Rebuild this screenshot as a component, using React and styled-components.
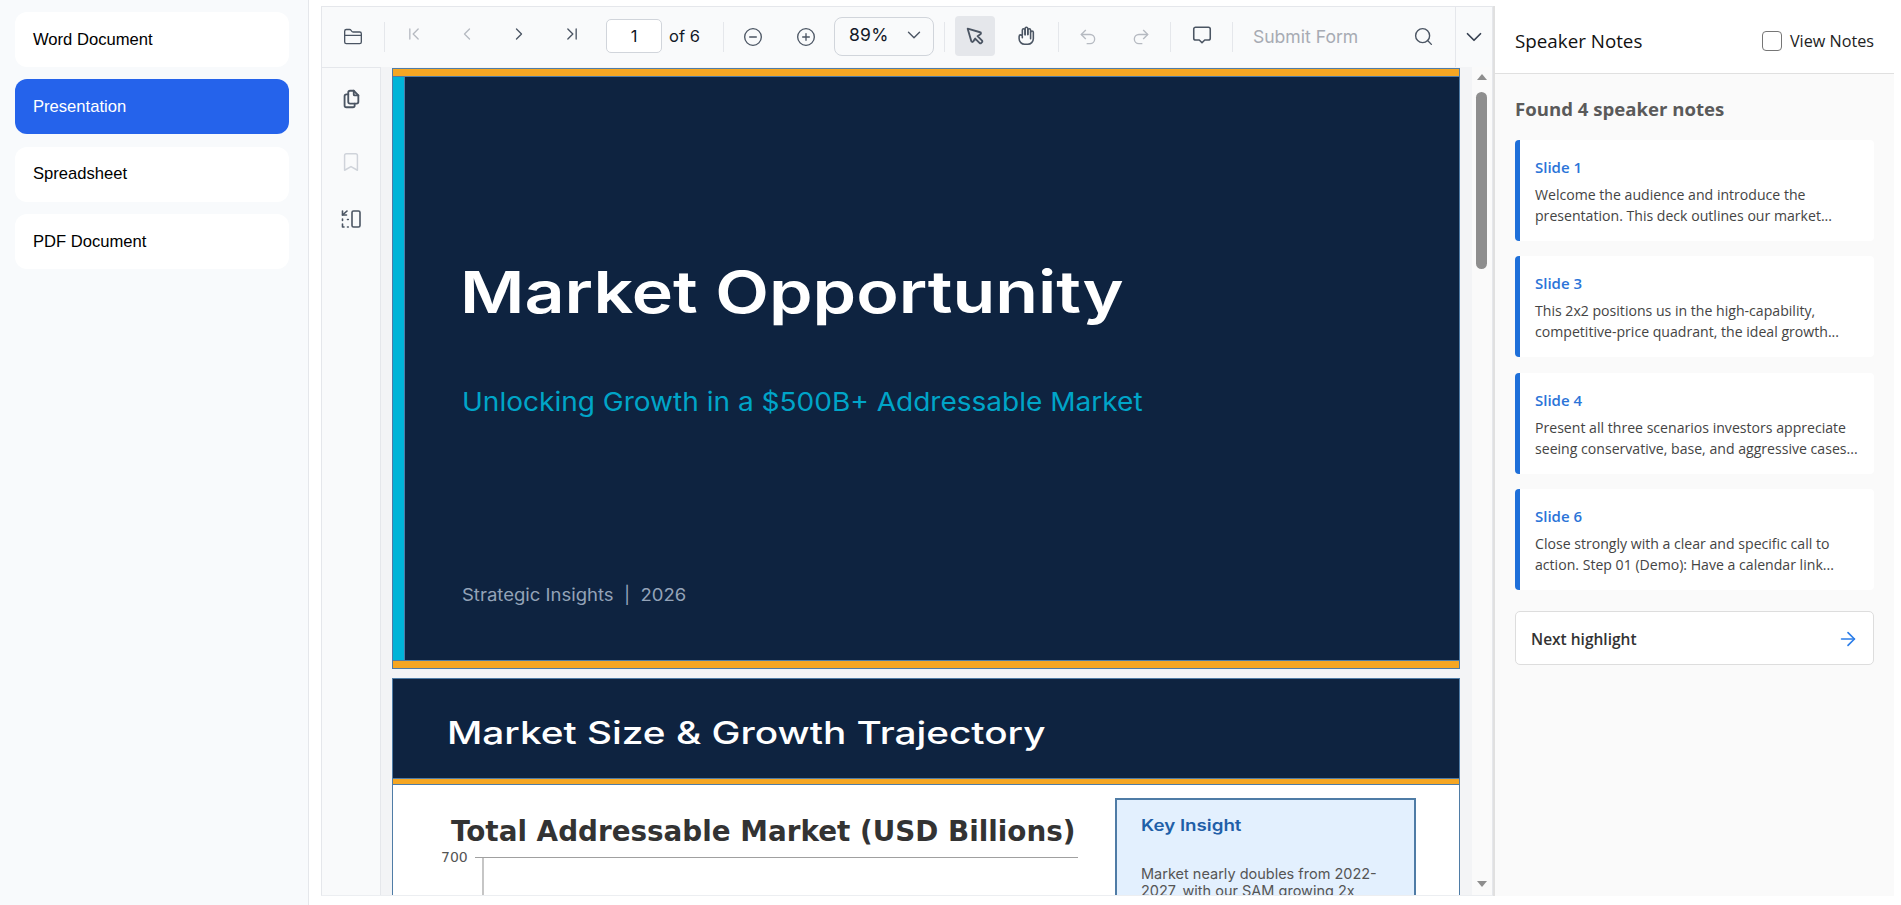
import React from "react";
import styled, { createGlobalStyle } from "styled-components";
import {
  FolderClosed,
  ChevronFirst,
  ChevronLeft,
  ChevronRight,
  ChevronLast,
  CircleMinus,
  CirclePlus,
  ChevronDown,
  Undo2,
  Redo2,
  Search,
  Bookmark,
  ArrowRight,
} from "lucide-react";
import { TbPointer, TbFiles } from "react-icons/tb";

const GlobalStyle = createGlobalStyle`
  html, body {
    margin: 0;
    padding: 0;
    background: #fff;
    overflow: hidden;
  }
  * { box-sizing: border-box; }
`;

const Page = styled.div`
  display: flex;
  width: 1901px;
  height: 905px;
  overflow: hidden;
  font-family: "Liberation Sans", Arial, sans-serif;
`;

// colonne de gauche
const Sidebar = styled.aside`
  width: 309px;
  flex: none;
  display: flex;
  flex-direction: column;
  gap: 12.4px;
  padding: 12px 19px 0 15px;
  background: #f8fafc;
  border-right: 1px solid #e5e7eb;
`;

const DocButton = styled.div`
  height: 55px;
  display: flex;
  align-items: center;
  padding: 0 18px;
  border-radius: 12px;
  font-size: 16.6px;
  color: ${(p) => (p.$active ? "#fff" : "#000")};
  background: ${(p) => (p.$active ? "#2563eb" : "#fff")};
`;

const Workspace = styled.div`
  flex: 1;
  display: flex;
  padding: 6px 7px 9px 12px;
  min-width: 0;
`;

const Viewer = styled.section`
  width: 1172px;
  flex: none;
  display: flex;
  flex-direction: column;
  background: #f3f4f6;
  border: 1px solid #e5e7eb;
  border-bottom-color: #eceef1;
  overflow: hidden;
`;

const Toolbar = styled.div`
  height: 60px;
  flex: none;
  display: flex;
  align-items: center;
  background: #f9fafb;
  font-family: Inter, sans-serif;
`;

const Tool = styled.div`
  width: ${(p) => p.$w || 40}px;
  height: 40px;
  flex: none;
  margin-left: ${(p) => p.$ml || 0}px;
  display: flex;
  align-items: center;
  justify-content: center;
  border-radius: 4px;
  color: ${(p) => (p.$off ? "#b6bac1" : "#4b5563")};
  background: ${(p) => (p.$on ? "#e5e7eb" : "transparent")};
  transform: translateY(${(p) => p.$dy || 0}px);
`;

const SearchTool = styled(Tool)`
  margin-left: auto;
  margin-right: 12px;
`;

const Sep = styled.span`
  width: 1px;
  height: 30px;
  flex: none;
  margin-left: ${(p) => p.$ml || 0}px;
  background: #e5e7eb;
`;

const PageInput = styled.div`
  width: 56px;
  height: 34px;
  flex: none;
  margin: -2px 0 0 14px;
  display: flex;
  align-items: center;
  justify-content: center;
  padding-bottom: 1px;
  background: #fff;
  border: 1px solid #d1d5db;
  border-radius: 5px;
  font-size: 16.5px;
  color: #111827;
`;

const OfPages = styled.span`
  margin-left: 7px;
  padding-bottom: 3px;
  font-size: 16.5px;
  color: #111827;
`;

const ZoomSelect = styled.div`
  width: 100px;
  height: 39px;
  flex: none;
  margin: -2px 0 0 8px;
  display: flex;
  align-items: center;
  justify-content: space-between;
  padding: 0 8px 3px 14px;
  background: #f9fafb;
  border: 1px solid #d1d5db;
  border-radius: 8px;
  font-size: 17.5px;
  letter-spacing: 0.4px;
  color: #111827;
`;

const SubmitForm = styled.span`
  margin-left: 20px;
  padding-bottom: 1px;
  font-size: 17.6px;
  color: #a7abb3;
  white-space: nowrap;
`;

const MoreBox = styled.div`
  width: 37px;
  flex: none;
  align-self: stretch;
  display: flex;
  align-items: center;
  justify-content: center;
  border-left: 1px solid #e5e7eb;
  color: #374151;
`;

const ViewerBody = styled.div`
  flex: 1;
  display: flex;
  min-height: 0;
`;

const Rail = styled.div`
  width: 59px;
  flex: none;
  display: flex;
  flex-direction: column;
  align-items: center;
  gap: 20px;
  padding-top: 11px;
  background: #f9fafb;
  border-right: 1px solid #e5e7eb;
  border-top: 1px solid #e5e7eb;
`;

const RailIcon = styled.div`
  width: 40px;
  height: 40px;
  display: flex;
  align-items: center;
  justify-content: center;
  color: ${(p) => (p.$off ? "#cfd3da" : "#4b5563")};
  transform: translateY(${(p) => p.$dy || 0}px);
`;

const Pages = styled.div`
  flex: 1;
  min-width: 0;
  display: flex;
  flex-direction: column;
  gap: 9px;
  padding: 1px 12px 0 11px;
  overflow: hidden;
`;

const TitleSlide = styled.div`
  height: 601px;
  flex: none;
  display: flex;
  flex-direction: column;
  background: #0e2340;
  border: 1px solid #4f7ca6;
`;

const GoldBar = styled.div`
  height: ${(p) => p.$h}px;
  flex: none;
  background: #f5a623;
  border-${(p) => p.$edge}: 1px solid #4f7ca6;
`;

const TitleRow = styled.div`
  flex: 1;
  display: flex;
  min-height: 0;
`;

const CyanBar = styled.div`
  width: 12px;
  flex: none;
  background: #00b4d8;
  border-right: 1px solid #4f7ca6;
`;

const TitleBody = styled.div`
  flex: 1;
  display: flex;
  flex-direction: column;
  padding: 181px 0 0 57px;
`;

// le PDF étire ses polices en largeur
const BigTitle = styled.h1`
  margin: 0 0 0 -2px;
  font-family: Inter, sans-serif;
  font-size: 58px;
  font-weight: 600;
  line-height: 68px;
  white-space: nowrap;
  color: #fff;
  transform: scaleX(1.205);
  transform-origin: left center;
`;

const Subtitle = styled.div`
  margin-top: 60px;
  font-family: Inter, sans-serif;
  font-size: 26px;
  line-height: 32px;
  white-space: nowrap;
  color: #00a5c8;
  transform: scaleX(1.078);
  transform-origin: left center;
`;

const Byline = styled.div`
  margin-top: 166px;
  font-family: Inter, sans-serif;
  font-size: 17px;
  line-height: 22px;
  white-space: pre;
  color: #94a3b8;
  transform: scaleX(1.088);
  transform-origin: left center;
`;

const ChartSlide = styled.div`
  flex: none;
  height: 500px;
  background: #fff;
  border: 1px solid #4f7ca6;
`;

const SlideHeader = styled.div`
  height: 100px;
  display: flex;
  align-items: center;
  padding: 8px 0 0 54px;
  background: #0e2340;
  border-bottom: 1px solid #4f7ca6;
`;

const SlideTitle = styled.h2`
  margin: 0;
  font-family: Inter, sans-serif;
  font-size: 31px;
  font-weight: 500;
  white-space: nowrap;
  color: #fff;
  transform: scaleX(1.25);
  transform-origin: left center;
`;

const ChartRow = styled.div`
  position: relative;
  display: flex;
  justify-content: space-between;
  padding: 13px 43px 0 48px;
`;

const ChartCol = styled.div`
  width: 640px;
`;

const ChartTitle = styled.div`
  margin: 17px 0 0 10px;
  font-family: "DejaVu Sans", sans-serif;
  font-size: 27.8px;
  font-weight: 700;
  line-height: 34px;
  white-space: nowrap;
  color: #333;
`;

const ChartPlot = styled.div`
  margin-top: 1px;
  display: flex;
  gap: 7px;
`;

const AxisLabel = styled.span`
  font-family: "DejaVu Sans", sans-serif;
  font-size: 14px;
  line-height: 14px;
  color: #555;
`;

const InsightBox = styled.div`
  width: 301px;
  height: 200px;
  padding: 14px 20px 0 24px;
  background: #e3f0fe;
  border: 2px solid #4f7ca6;
`;

const InsightTitle = styled.div`
  font-family: Inter, sans-serif;
  font-size: 16px;
  font-weight: 600;
  line-height: 22px;
  color: #1f5fa8;
  transform: scaleX(1.17);
  transform-origin: left center;
`;

const InsightText = styled.div`
  margin-top: 29px;
  font-family: Inter, sans-serif;
  font-size: 14.5px;
  line-height: 17px;
  white-space: nowrap;
  color: #555;
`;

const ScrollTrack = styled.div`
  width: 20px;
  flex: none;
  position: relative;
  background: #fafafa;
`;

const ScrollArrow = styled.span`
  position: absolute;
  left: 5px;
  ${(p) => (p.$down ? "bottom: 8px;" : "top: 7px;")}
  border-left: 5px solid transparent;
  border-right: 5px solid transparent;
  ${(p) => (p.$down ? "border-top" : "border-bottom")}: 6px solid #8e8e8e;
`;

const ScrollThumb = styled.div`
  position: absolute;
  left: 4px;
  top: 25px;
  width: 11px;
  height: 177px;
  border-radius: 6px;
  background: #8e8e8e;
`;

const Sash = styled.div`
  width: 2px;
  flex: none;
  background: #e0e0e0;
`;

const NotesPanel = styled.aside`
  width: 399px;
  flex: none;
  display: flex;
  flex-direction: column;
  background: #fafafa;
  font-family: "Open Sans", "Noto Sans", sans-serif;
`;

const NotesHeader = styled.header`
  height: 68px;
  flex: none;
  display: flex;
  align-items: center;
  justify-content: space-between;
  padding: 2px 20px 0;
  background: #fff;
  border-bottom: 1px solid #e0e0e0;
`;

const NotesHeading = styled.div`
  font-size: 18.8px;
  color: #111;
`;

const ViewToggle = styled.div`
  display: flex;
  align-items: center;
  gap: 8px;
  font-size: 16.2px;
  font-weight: 500;
  color: #222;
`;

const CheckBox = styled.span`
  width: 20px;
  height: 20px;
  background: #fff;
  border: 1.5px solid #767676;
  border-radius: 4px;
`;

const NotesBody = styled.div`
  display: flex;
  flex-direction: column;
  gap: 15.5px;
  padding: 23px 20px 0;
`;

const FoundLabel = styled.div`
  margin-bottom: 3px;
  font-size: 18.6px;
  font-weight: 700;
  line-height: 24px;
  color: #5a5a5a;
`;

const NoteCard = styled.div`
  height: 101px;
  padding: 15px 12px 0 15px;
  background: #fff;
  border-left: 5px solid #1e6fd9;
  border-radius: 4px;
`;

const NoteSlide = styled.div`
  font-size: 15px;
  font-weight: 600;
  line-height: 24px;
  color: #2b74d8;
`;

const NoteText = styled.div`
  margin-top: 5px;
  font-size: 14.1px;
  line-height: 21px;
  white-space: nowrap;
  color: #444;
`;

const NextButton = styled.div`
  height: 54px;
  margin-top: 5px;
  display: flex;
  align-items: center;
  justify-content: space-between;
  padding: 2px 14px 0 15px;
  background: #fff;
  border: 1px solid #ddd;
  border-radius: 5px;
  font-size: 15.5px;
  font-weight: 600;
  color: #333;
`;

const docs = ["Word Document", "Presentation", "Spreadsheet", "PDF Document"];

const notes = [
  {
    slide: "Slide 1",
    lines: ["Welcome the audience and introduce the", "presentation. This deck outlines our market..."],
  },
  {
    slide: "Slide 3",
    lines: ["This 2x2 positions us in the high-capability,", "competitive-price quadrant, the ideal growth..."],
  },
  {
    slide: "Slide 4",
    lines: ["Present all three scenarios investors appreciate", "seeing conservative, base, and aggressive cases..."],
  },
  {
    slide: "Slide 6",
    lines: ["Close strongly with a clear and specific call to", "action. Step 01 (Demo): Have a calendar link..."],
  },
];

function MoveToPanelIcon() {
  return (
    <svg width="24" height="24" viewBox="0 0 24 24" fill="none" stroke="currentColor" strokeWidth="1.6" strokeLinecap="round" strokeLinejoin="round">
      <rect x="13" y="4" width="8" height="16" rx="1.5" />
      <path d="M3.5 4v4h4" />
      <path d="M3.5 8L8 4" />
      <path d="M3.5 12v1.5M3.5 17v3h1.5M8.5 20h.8M8.5 12.5h.8" />
    </svg>
  );
}

function HandIcon() {
  return (
    <svg width="22" height="22" viewBox="0 0 24 24" fill="none" stroke="currentColor" strokeWidth="1.7" strokeLinecap="round" strokeLinejoin="round">
      <path d="M8 11V5.5a1.5 1.5 0 0 1 3 0V11" />
      <path d="M11 10V4a1.5 1.5 0 0 1 3 0v6" />
      <path d="M14 10.5V5.5a1.5 1.5 0 0 1 3 0V15" />
      <path d="M17 8a1.5 1.5 0 0 1 3 0v7a6 6 0 0 1-6 6h-3.5A6 6 0 0 1 4.5 15v-2.5a1.75 1.75 0 0 1 3.5 0V14" />
    </svg>
  );
}

function CommentIcon() {
  return (
    <svg width="22" height="22" viewBox="0 0 24 24" fill="none" stroke="currentColor" strokeWidth="1.7" strokeLinecap="round" strokeLinejoin="round">
      <path d="M5 3.5h14a2 2 0 0 1 2 2v10a2 2 0 0 1-2 2h-4l-3 3-3-3H5a2 2 0 0 1-2-2v-10a2 2 0 0 1 2-2z" />
    </svg>
  );
}

export default function App() {
  return (
    <>
      <GlobalStyle />
      <Page>
        <Sidebar>
          {docs.map((d) => (
            <DocButton key={d} $active={d === "Presentation"}>
              {d}
            </DocButton>
          ))}
        </Sidebar>

        <Workspace>
          <Viewer>
            <Toolbar>
              <Tool $ml={11}>
                <FolderClosed size={20} strokeWidth={1.6} />
              </Tool>
              <Sep $ml={11} />
              <Tool $ml={9} $off $dy={-3}>
                <ChevronFirst size={20} strokeWidth={1.6} />
              </Tool>
              <Tool $ml={13} $off $dy={-3}>
                <ChevronLeft size={20} strokeWidth={1.6} />
              </Tool>
              <Tool $ml={12} $dy={-3}>
                <ChevronRight size={20} strokeWidth={1.6} />
              </Tool>
              <Tool $ml={13} $dy={-3}>
                <ChevronLast size={20} strokeWidth={1.6} />
              </Tool>
              <PageInput>1</PageInput>
              <OfPages>of 6</OfPages>
              <Sep $ml={23} />
              <Tool $ml={9}>
                <CircleMinus size={20} strokeWidth={1.6} />
              </Tool>
              <Tool $ml={13}>
                <CirclePlus size={20} strokeWidth={1.6} />
              </Tool>
              <ZoomSelect>
                89%
                <ChevronDown size={22} strokeWidth={1.5} color="#4b5563" />
              </ZoomSelect>
              <Sep $ml={10} />
              <Tool $ml={10} $on $dy={-1}>
                <TbPointer size={22} />
              </Tool>
              <Tool $ml={11} $dy={-1}>
                <HandIcon />
              </Tool>
              <Sep $ml={12} />
              <Tool $ml={9} $off>
                <Undo2 size={20} strokeWidth={1.6} />
              </Tool>
              <Tool $ml={13} $off>
                <Redo2 size={20} strokeWidth={1.6} />
              </Tool>
              <Sep $ml={9} />
              <Tool $ml={11} $dy={-2}>
                <CommentIcon />
              </Tool>
              <Sep $ml={10} />
              <SubmitForm>Submit Form</SubmitForm>
              <SearchTool $dy={-1}>
                <Search size={21} strokeWidth={1.6} />
              </SearchTool>
              <MoreBox>
                <ChevronDown size={26} strokeWidth={1.6} />
              </MoreBox>
            </Toolbar>

            <ViewerBody>
              <Rail>
                <RailIcon>
                  <TbFiles size={22} />
                </RailIcon>
                <RailIcon $off $dy={3}>
                  <Bookmark size={22} strokeWidth={1.6} />
                </RailIcon>
                <RailIcon>
                  <MoveToPanelIcon />
                </RailIcon>
              </Rail>

              <Pages>
                <TitleSlide>
                  <GoldBar $h={8} $edge="bottom" />
                  <TitleRow>
                    <CyanBar />
                    <TitleBody>
                      <BigTitle>Market Opportunity</BigTitle>
                      <Subtitle>Unlocking Growth in a $500B+ Addressable Market</Subtitle>
                      <Byline>Strategic Insights  |  2026</Byline>
                    </TitleBody>
                  </TitleRow>
                  <GoldBar $h={8} $edge="top" />
                </TitleSlide>

                <ChartSlide>
                  <SlideHeader>
                    <SlideTitle>Market Size &amp; Growth Trajectory</SlideTitle>
                  </SlideHeader>
                  <GoldBar $h={6} $edge="bottom" />
                  <ChartRow>
                    <ChartCol>
                      <ChartTitle>Total Addressable Market (USD Billions)</ChartTitle>
                      <ChartPlot>
                        <AxisLabel>700</AxisLabel>
                        <svg width="603" height="60" viewBox="0 0 603 60">
                          <path d="M0 7.5H8M8 7.5H603M8 7.5V60" fill="none" stroke="#a0a0a0" strokeWidth="1.2" />
                        </svg>
                      </ChartPlot>
                    </ChartCol>
                    <InsightBox>
                      <InsightTitle>Key Insight</InsightTitle>
                      <InsightText>
                        Market nearly doubles from 2022-
                        <br />
                        2027, with our SAM growing 2x
                      </InsightText>
                    </InsightBox>
                  </ChartRow>
                </ChartSlide>
              </Pages>

              <ScrollTrack>
                <ScrollArrow />
                <ScrollThumb />
                <ScrollArrow $down />
              </ScrollTrack>
            </ViewerBody>
          </Viewer>

          <Sash />

          <NotesPanel>
            <NotesHeader>
              <NotesHeading>Speaker Notes</NotesHeading>
              <ViewToggle>
                <CheckBox />
                View Notes
              </ViewToggle>
            </NotesHeader>
            <NotesBody>
              <FoundLabel>Found 4 speaker notes</FoundLabel>
              {notes.map((n) => (
                <NoteCard key={n.slide}>
                  <NoteSlide>{n.slide}</NoteSlide>
                  <NoteText>
                    {n.lines[0]}
                    <br />
                    {n.lines[1]}
                  </NoteText>
                </NoteCard>
              ))}
              <NextButton>
                Next highlight
                <ArrowRight size={22} strokeWidth={1.8} color="#2b7de9" />
              </NextButton>
            </NotesBody>
          </NotesPanel>
        </Workspace>
      </Page>
    </>
  );
}
